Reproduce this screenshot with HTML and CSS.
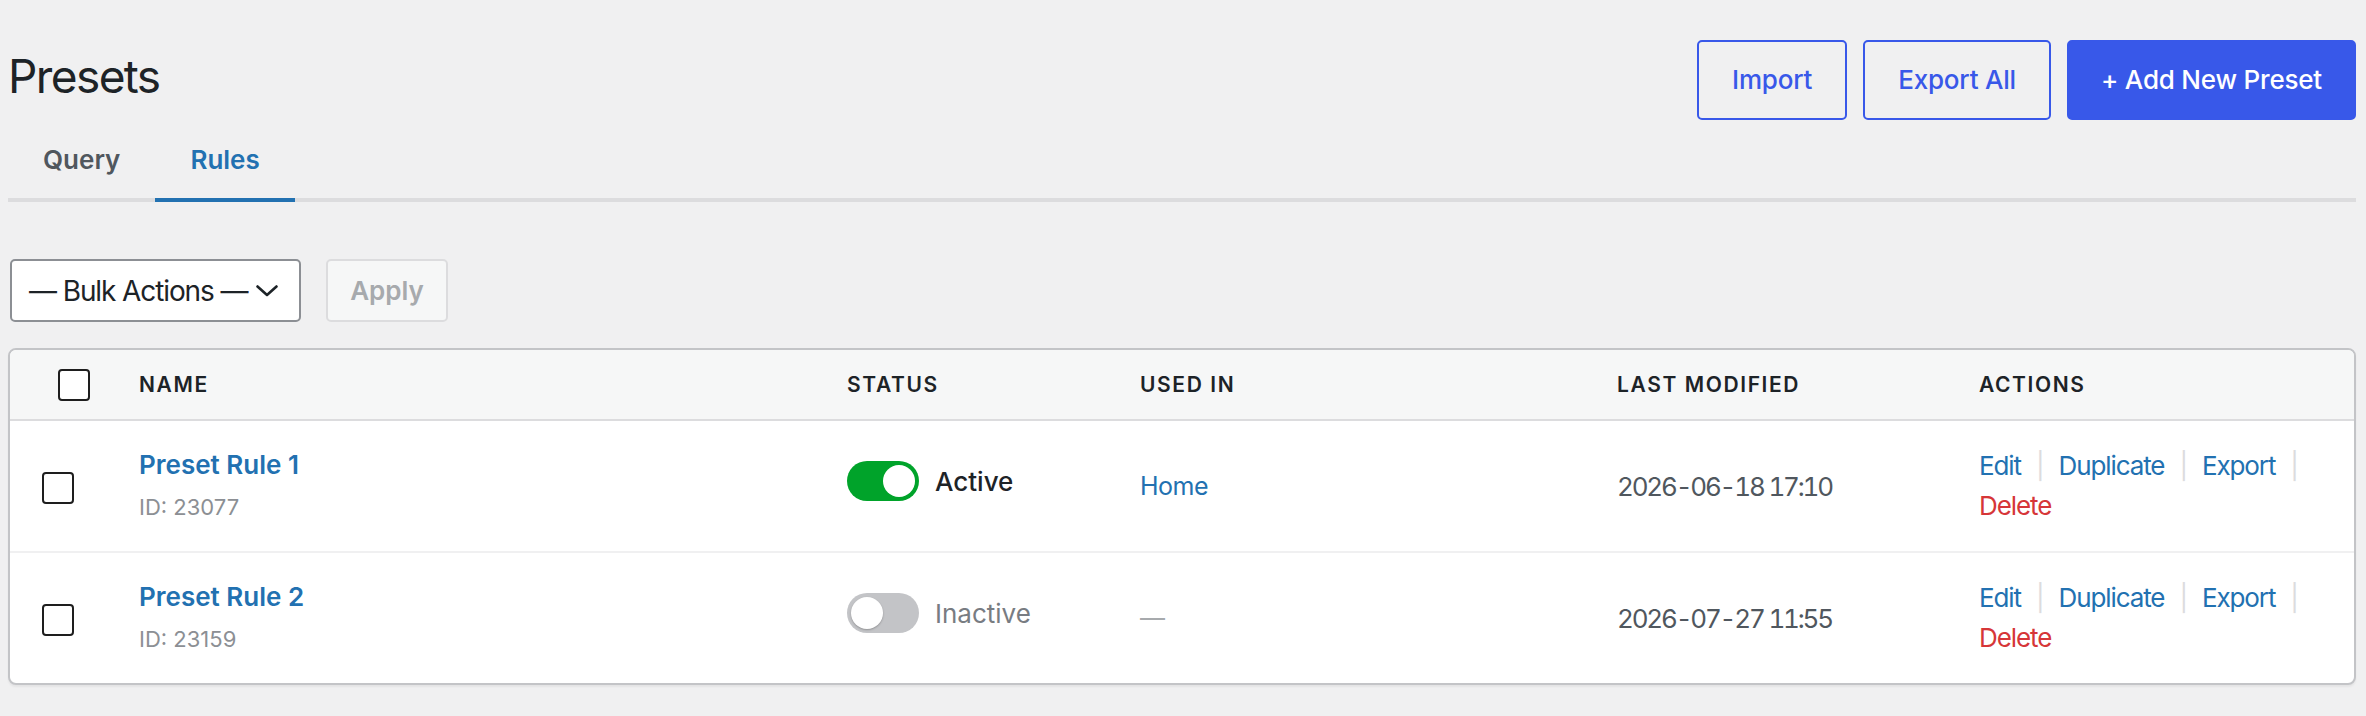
FILE: index.html
```html
<!DOCTYPE html>
<html lang="en">
<head>
<meta charset="utf-8">
<title>Presets</title>
<link rel="stylesheet" href="styles.css">
</head>
<body>
<div class="wrap">
  <header class="page-head">
    <h1 class="page-title">Presets</h1>
    <div class="head-actions">
      <button class="btn btn-outline" type="button">Import</button>
      <button class="btn btn-outline" type="button">Export All</button>
      <button class="btn btn-primary" type="button">+ Add New Preset</button>
    </div>
  </header>

  <nav class="tabs">
    <a class="tab" href="#">Query</a>
    <a class="tab is-active" href="#">Rules</a>
  </nav>

  <div class="bulk">
    <div class="select">
      <span class="select-text">— Bulk Actions —</span>
      <svg class="chevron" width="22" height="12" viewBox="0 0 22 12" aria-hidden="true">
        <path d="M1.5 1.5 L11 10 L20.5 1.5" fill="none" stroke="#1d2327" stroke-width="2.6" stroke-linecap="round" stroke-linejoin="round"/>
      </svg>
    </div>
    <button class="btn-apply" type="button" disabled>Apply</button>
  </div>

  <div class="table">
    <div class="row row-head">
      <div class="cell cell-cb cell-cb-head"><span class="checkbox"></span></div>
      <div class="cell th">Name</div>
      <div class="cell th">Status</div>
      <div class="cell th">Used In</div>
      <div class="cell th">Last Modified</div>
      <div class="cell th">Actions</div>
    </div>

    <div class="row">
      <div class="cell cell-cb"><span class="checkbox"></span></div>
      <div class="cell name">
        <a class="name-link" href="#">Preset Rule 1</a>
        <span class="name-id">ID: 23077</span>
      </div>
      <div class="cell">
        <div class="status">
          <span class="toggle is-on"><span class="knob"></span></span>
          <span class="status-label">Active</span>
        </div>
      </div>
      <div class="cell"><a class="used-link" href="#">Home</a></div>
      <div class="cell date">2026-06-18 17:10</div>
      <div class="cell">
        <div class="row-actions">
          <span class="act"><a href="#">Edit</a><span class="sep">|</span></span>
          <span class="act"><a href="#">Duplicate</a><span class="sep">|</span></span>
          <span class="act"><a href="#">Export</a><span class="sep">|</span></span>
          <span class="act"><a class="danger" href="#">Delete</a></span>
        </div>
      </div>
    </div>

    <div class="row">
      <div class="cell cell-cb"><span class="checkbox"></span></div>
      <div class="cell name">
        <a class="name-link" href="#">Preset Rule 2</a>
        <span class="name-id">ID: 23159</span>
      </div>
      <div class="cell">
        <div class="status">
          <span class="toggle"><span class="knob"></span></span>
          <span class="status-label is-off">Inactive</span>
        </div>
      </div>
      <div class="cell"><span class="empty">—</span></div>
      <div class="cell date">2026-07-27 11:55</div>
      <div class="cell">
        <div class="row-actions">
          <span class="act"><a href="#">Edit</a><span class="sep">|</span></span>
          <span class="act"><a href="#">Duplicate</a><span class="sep">|</span></span>
          <span class="act"><a href="#">Export</a><span class="sep">|</span></span>
          <span class="act"><a class="danger" href="#">Delete</a></span>
        </div>
      </div>
    </div>
  </div>
</div>
</body>
</html>
```

FILE: styles.css
```css
* {
  box-sizing: border-box;
}

html,
body {
  margin: 0;
  background: #f0f0f1;
}

body {
  font-family: Inter, "Noto Sans", "Liberation Sans", sans-serif;
  color: #1d2327;
  -webkit-font-smoothing: antialiased;
}

a {
  text-decoration: none;
}

.wrap {
  padding: 40px 10px 40px 8px;
}

/* Title + header buttons */
.page-head {
  display: flex;
  justify-content: space-between;
  align-items: flex-start;
  height: 80px;
}

.page-title {
  margin: 8px 0 0;
  font-size: 46px;
  line-height: 56px;
  font-weight: 400;
  letter-spacing: -1.6px;
  color: #1d2327;
}

.head-actions {
  display: flex;
  gap: 16px;
}

.btn {
  height: 80px;
  border-radius: 5px;
  font-family: inherit;
  font-size: 26px;
  font-weight: 500;
  line-height: 1;
  letter-spacing: -0.2px;
  cursor: pointer;
}

.btn-outline {
  padding: 0 33px;
  background: transparent;
  border: 2px solid #3858e9;
  color: #3858e9;
}

.btn-primary {
  padding: 0 32px;
  background: #3858e9;
  border: 2px solid #3858e9;
  color: #fff;
}

/* Tabs */
.tabs {
  display: flex;
  padding-top: 22px;
  border-bottom: 4px solid #dcdcde;
}

.tab {
  padding: 0 35px 20px;
  margin-bottom: -4px;
  border-bottom: 4px solid transparent;
  font-size: 26px;
  line-height: 36px;
  font-weight: 600;
  color: #50575e;
}

.tab.is-active {
  color: #2271b1;
  border-bottom-color: #2271b1;
}

/* Bulk actions */
.bulk {
  display: flex;
  gap: 25px;
  margin: 57px 0 0 2px;
}

.select {
  display: flex;
  align-items: center;
  justify-content: space-between;
  width: 291px;
  height: 63px;
  padding: 0 21px 0 17px;
  background: #fff;
  border: 2px solid #8c8f94;
  border-radius: 5px;
  font-size: 28px;
  letter-spacing: -1.1px;
  white-space: nowrap;
  color: #1d2327;
}

.chevron {
  flex: none;
}

.btn-apply {
  width: 122px;
  height: 63px;
  background: #f6f7f7;
  border: 2px solid #dcdcde;
  border-radius: 5px;
  font-family: inherit;
  font-size: 26px;
  font-weight: 600;
  color: #a7aaad;
}

/* Table */
.table {
  margin-top: 26px;
  background: #fff;
  border: 2px solid #c3c4c7;
  border-radius: 8px;
  overflow: hidden;
  box-shadow: 0 2px 2px rgba(0, 0, 0, 0.05);
}

.row {
  display: grid;
  grid-template-columns: 129px 708px 293px 477px 362px 1fr;
  align-items: center;
  height: 132px;
  border-top: 2px solid #f0f0f1;
}

.row-head {
  height: 71px;
  background: #f6f7f7;
  border-top: 0;
  border-bottom: 2px solid #dcdcde;
}

.row-head + .row {
  border-top: 0;
  height: 130px;
}

.cell {
  min-width: 0;
}

.cell-cb {
  display: flex;
  padding-left: 32px;
  padding-top: 3px;
}

.cell-cb-head {
  padding-left: 48px;
  padding-top: 0;
}

.checkbox {
  display: block;
  width: 32px;
  height: 32px;
  border: 2px solid #1e1e1e;
  border-radius: 4px;
  background: #fff;
}

.th {
  font-size: 21px;
  font-weight: 600;
  letter-spacing: 1.6px;
  text-transform: uppercase;
  color: #1d2327;
}

.name {
  display: flex;
  flex-direction: column;
  gap: 6px;
}

.name-link {
  font-size: 26px;
  line-height: 36px;
  font-weight: 600;
  color: #2271b1;
}

.name-id {
  font-size: 22px;
  line-height: 36px;
  color: #8c8f94;
}

.status {
  display: flex;
  align-items: center;
  gap: 16px;
  margin-bottom: 10px;
}

.toggle {
  display: flex;
  justify-content: flex-start;
  width: 72px;
  height: 40px;
  padding: 4px;
  border-radius: 20px;
  background: #c3c4c7;
}

.toggle.is-on {
  justify-content: flex-end;
  background: #00a32a;
}

.knob {
  width: 32px;
  height: 32px;
  border-radius: 50%;
  background: #fff;
  box-shadow: 0 1px 2px rgba(0, 0, 0, 0.25);
}

.toggle.is-on .knob {
  box-shadow: none;
}

.status-label {
  font-size: 26px;
  font-weight: 500;
  color: #1d2327;
}

.status-label.is-off {
  font-weight: 400;
  color: #787c82;
}

.used-link {
  font-size: 25px;
  letter-spacing: -0.5px;
  color: #2271b1;
}

.empty {
  font-size: 25px;
  color: #a7aaad;
}

.date {
  font-size: 26px;
  font-variant-numeric: tabular-nums;
  letter-spacing: -2.2px;
  color: #50575e;
}

.row-actions {
  display: flex;
  flex-wrap: wrap;
  font-size: 26px;
  line-height: 40px;
  letter-spacing: -1.1px;
}

.act {
  display: inline-flex;
  white-space: nowrap;
}

.act a {
  color: #2271b1;
}

.act a.danger {
  color: #d63638;
}

.sep {
  margin: 0 15px;
  color: #dcdcde;
}
```
